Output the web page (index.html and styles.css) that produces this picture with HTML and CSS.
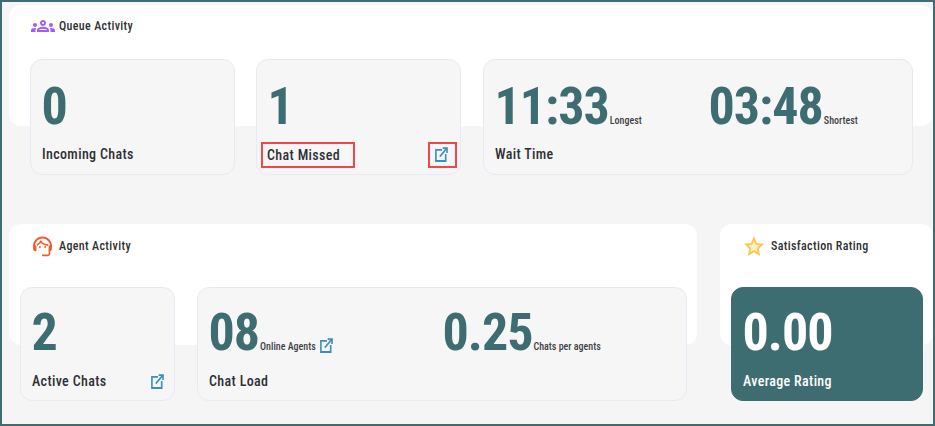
FILE: index.html
```html
<!DOCTYPE html>
<html lang="en">
<head>
<meta charset="utf-8">
<title>Dashboard</title>
<link rel="stylesheet" href="styles.css">
</head>
<body>
<svg class="defs" width="0" height="0" aria-hidden="true">
  <symbol id="ext" viewBox="0.6 0.8 14.6 14.8" preserveAspectRatio="none">
    <path d="M8.5 3.6H1.6v11h11V7.8" fill="none" stroke="currentColor" stroke-width="1.8"/>
    <path d="M6 10.2 13.8 2.2" fill="none" stroke="currentColor" stroke-width="1.8"/>
    <path d="M9.2 1h5.8v5.8h-1.8V2.8H9.2z" fill="currentColor"/>
  </symbol>
</svg>
<main class="board">
  <section class="panel panel-queue">
    <h2 class="panel-head">
      <svg class="head-icon icon-purple" viewBox="0 0 24 24"><path fill="currentColor" d="M4,13c1.1,0,2-0.9,2-2c0-1.1-0.9-2-2-2s-2,0.9-2,2C2,12.1,2.9,13,4,13z M5.13,14.1C4.76,14.04,4.39,14,4,14 c-0.99,0-1.93,0.21-2.78,0.58C0.48,14.9,0,15.62,0,16.43V18l4.5,0v-1.61C4.5,15.56,4.73,14.78,5.13,14.1z M20,13c1.1,0,2-0.9,2-2 c0-1.1-0.9-2-2-2s-2,0.9-2,2C18,12.1,18.9,13,20,13z M24,16.43c0-0.81-0.48-1.53-1.22-1.85C21.93,14.21,20.99,14,20,14 c-0.39,0-0.76,0.04-1.13,0.1c0.4,0.68,0.63,1.46,0.63,2.29V18l4.5,0V16.43z M16.24,13.65c-1.17-0.52-2.61-0.9-4.24-0.9 c-1.63,0-3.07,0.39-4.24,0.9C6.68,14.13,6,15.21,6,16.39V18h12v-1.61C18,15.21,17.32,14.13,16.24,13.65z M8.07,16 c0.09-0.23,0.13-0.39,0.91-0.69c0.97-0.38,1.99-0.56,3.02-0.56s2.05,0.18,3.02,0.56c0.77,0.3,0.81,0.46,0.91,0.69H8.07z M12,8 c0.55,0,1,0.45,1,1s-0.45,1-1,1s-1-0.45-1-1S11.45,8,12,8 M12,6c-1.66,0-3,1.34-3,3c0,1.66,1.34,3,3,3s3-1.34,3-3 C15,7.34,13.66,6,12,6L12,6z"/></svg>
      Queue Activity
    </h2>
    <div class="cards cards-queue">
      <article class="card">
        <div class="metrics"><span class="value">0</span></div>
        <div class="foot"><span class="label">Incoming Chats</span></div>
      </article>
      <article class="card">
        <div class="metrics"><span class="value">1</span></div>
        <div class="foot">
          <span class="label flagged">Chat Missed</span>
          <a class="ext ext-flagged"><svg class="ext-icon"><use href="#ext"/></svg></a>
        </div>
      </article>
      <article class="card">
        <div class="metrics metrics-wait">
          <div class="metric"><span class="value">11:33</span><span class="unit">Longest</span></div>
          <div class="metric"><span class="value">03:48</span><span class="unit">Shortest</span></div>
        </div>
        <div class="foot"><span class="label">Wait Time</span></div>
      </article>
    </div>
  </section>

  <div class="lower">
    <section class="panel panel-agent">
      <h2 class="panel-head">
        <svg class="head-icon icon-orange" viewBox="0 0 24 24">
          <path d="M4.4 17C2.800 15 2 13 2.200 10.800 2.800 5.600 6.800 1.800 12 1.800s9.200 3.800 9.800 9c.2 2.200-.6 4.200-2.200 6.200" fill="none" stroke="currentColor" stroke-width="2.200"/>
          <path d="M5.500 10.500C7.500 9.500 9 8 10 6.200c2 2.600 5 4 8.500 4.200" fill="none" stroke="currentColor" stroke-width="1.800"/>
          <rect x="1.500" y="10.500" width="3.500" height="6.500" rx="1.500" fill="currentColor"/>
          <rect x="19" y="10.500" width="3.500" height="6.500" rx="1.500" fill="currentColor"/>
          <circle cx="9" cy="12.500" r="1.100" fill="currentColor"/>
          <circle cx="15" cy="12.500" r="1.100" fill="currentColor"/>
          <path d="M20 16.500v3.500c0 1.200-.8 2-2 2h-6.500" fill="none" stroke="currentColor" stroke-width="2"/>
        </svg>
        Agent Activity
      </h2>
      <div class="cards cards-agent">
        <article class="card card-low">
          <div class="metrics"><span class="value">2</span></div>
          <div class="foot">
            <span class="label">Active Chats</span>
            <a class="ext ext-plain"><svg class="ext-icon"><use href="#ext"/></svg></a>
          </div>
        </article>
        <article class="card card-low">
          <div class="metrics metrics-load">
            <div class="metric"><span class="value">08</span><span class="unit">Online Agents</span><a class="ext ext-inline"><svg class="ext-icon"><use href="#ext"/></svg></a></div>
            <div class="metric"><span class="value">0.25</span><span class="unit">Chats per agents</span></div>
          </div>
          <div class="foot"><span class="label">Chat Load</span></div>
        </article>
      </div>
    </section>

    <section class="panel panel-rating">
      <h2 class="panel-head">
        <svg class="head-icon icon-star" viewBox="0 0 24 24" preserveAspectRatio="none"><path d="M12 2.800l2.800 6.200 6.700.7-5 4.500 1.400 6.600L12 17.400l-5.900 3.400 1.400-6.600-5-4.500 6.700-.7z" fill="#fdf0c8" stroke="#fcc94e" stroke-width="2.200" stroke-linejoin="miter"/></svg>
        Satisfaction Rating
      </h2>
      <div class="cards">
        <article class="card card-low card-solid">
          <div class="metrics"><span class="value">0.00</span></div>
          <div class="foot"><span class="label">Average Rating</span></div>
        </article>
      </div>
    </section>
  </div>
</main>
</body>
</html>
```
FILE: styles.css
```css
* { box-sizing: border-box; }
html, body { margin: 0; padding: 0; }
body {
  width: 935px;
  height: 426px;
  overflow: hidden;
  background: #f5f5f6;
  border: 2px solid #3e6d71;
  font-family: Roboto, "Liberation Sans", sans-serif;
  color: #2f3034;
}
.defs { position: absolute; }
.board { padding: 3px 0 0 7px; }
.panel {
  background: #fff;
  border-radius: 12px;
  height: 121px;
  padding-top: 9px;
}
.panel-head {
  display: flex;
  align-items: center;
  gap: 4px;
  height: 24px;
  margin: 0;
  padding-left: 22px;
  font-size: 12px;
  font-weight: 500;
  font-stretch: 75%;
  letter-spacing: 0.35px;
  line-height: 24px;
  color: #2f3034;
}
.head-icon { width: 24px; height: 24px; flex: none; }
.icon-purple { color: #a45cf6; }
.icon-orange { color: #f4592b; width: 21px; height: 21px; margin-right: 2px; }
.icon-star { width: 20px; height: 21px; margin-right: 3px; }

.cards { display: flex; }
.cards-queue {
  display: grid;
  grid-template-columns: 205px 205px 431px;
  gap: 21px;
  margin-top: 21px;
  padding-left: 21px;
}
.cards-queue .card:last-child { margin-left: 1px; }
.lower { display: flex; gap: 23px; margin-top: 98px; }
.panel-agent { width: 688px; padding-top: 10px; }
.panel-rating { width: 213px; padding-top: 10px; }
.panel-agent .panel-head { padding-left: 23px; }
.panel-rating .panel-head { padding-left: 24px; }
.cards-agent { gap: 22px; }
.panel-agent .cards, .panel-rating .cards { margin-top: 29px; padding-left: 11px; }

.card {
  flex: none;
  height: 116px;
  padding: 17px 11px 0;
  background: #f6f6f7;
  border: 1px solid #e9e9f4;
  border-radius: 12px;
}
.card-low { height: 114px; padding-top: 15px; }
.cards-agent .card:first-child { width: 155px; }
.cards-agent .card:last-child { width: 490px; }
.card-solid {
  width: 192px;
  background: #3e6d71;
  border-color: #3e6d71;
  color: #fff;
}
.metrics { display: flex; height: 60px; margin-left: -0.5px; }
.metric { display: flex; flex: none; align-items: baseline; }
.metrics-wait .metric { width: 214px; }
.metrics-load .metric { width: 234px; }
.value {
  font-size: 52px;
  font-weight: 700;
  font-stretch: 75%;
  letter-spacing: -1px;
  line-height: 60px;
  color: #3e6d71;
}
.card-solid .value { color: #fff; }
.unit {
  margin-left: 1px;
  font-size: 10px;
  font-weight: 500;
  font-stretch: 75%;
  color: #3f4044;
}
.foot {
  display: flex;
  align-items: center;
  justify-content: space-between;
  height: 24px;
  margin-top: 5px;
}
.card-low .foot { margin-top: 6px; }
.label {
  font-size: 14px;
  font-weight: 500;
  font-stretch: 75%;
  letter-spacing: 0.35px;
  line-height: 20px;
}
.card-solid .label { color: #fff; }
.flagged {
  display: block;
  width: 94px;
  height: 26px;
  margin: 2px 0 0 -7px;
  padding: 0 4px;
  border: 2px solid #f0474c;
  line-height: 22px;
}
.ext { display: block; color: #3a8fbe; line-height: 0; }
.ext-icon { width: 13px; height: 15px; }
.ext-flagged {
  width: 29px;
  height: 26px;
  margin: 2px -8px 0 0;
  padding: 3px 0 0 5px;
  border: 2px solid #f0474c;
}
.ext-plain { margin-right: -1px; }
.ext-inline { margin-left: 4px; align-self: center; margin-top: 25px; }
```
